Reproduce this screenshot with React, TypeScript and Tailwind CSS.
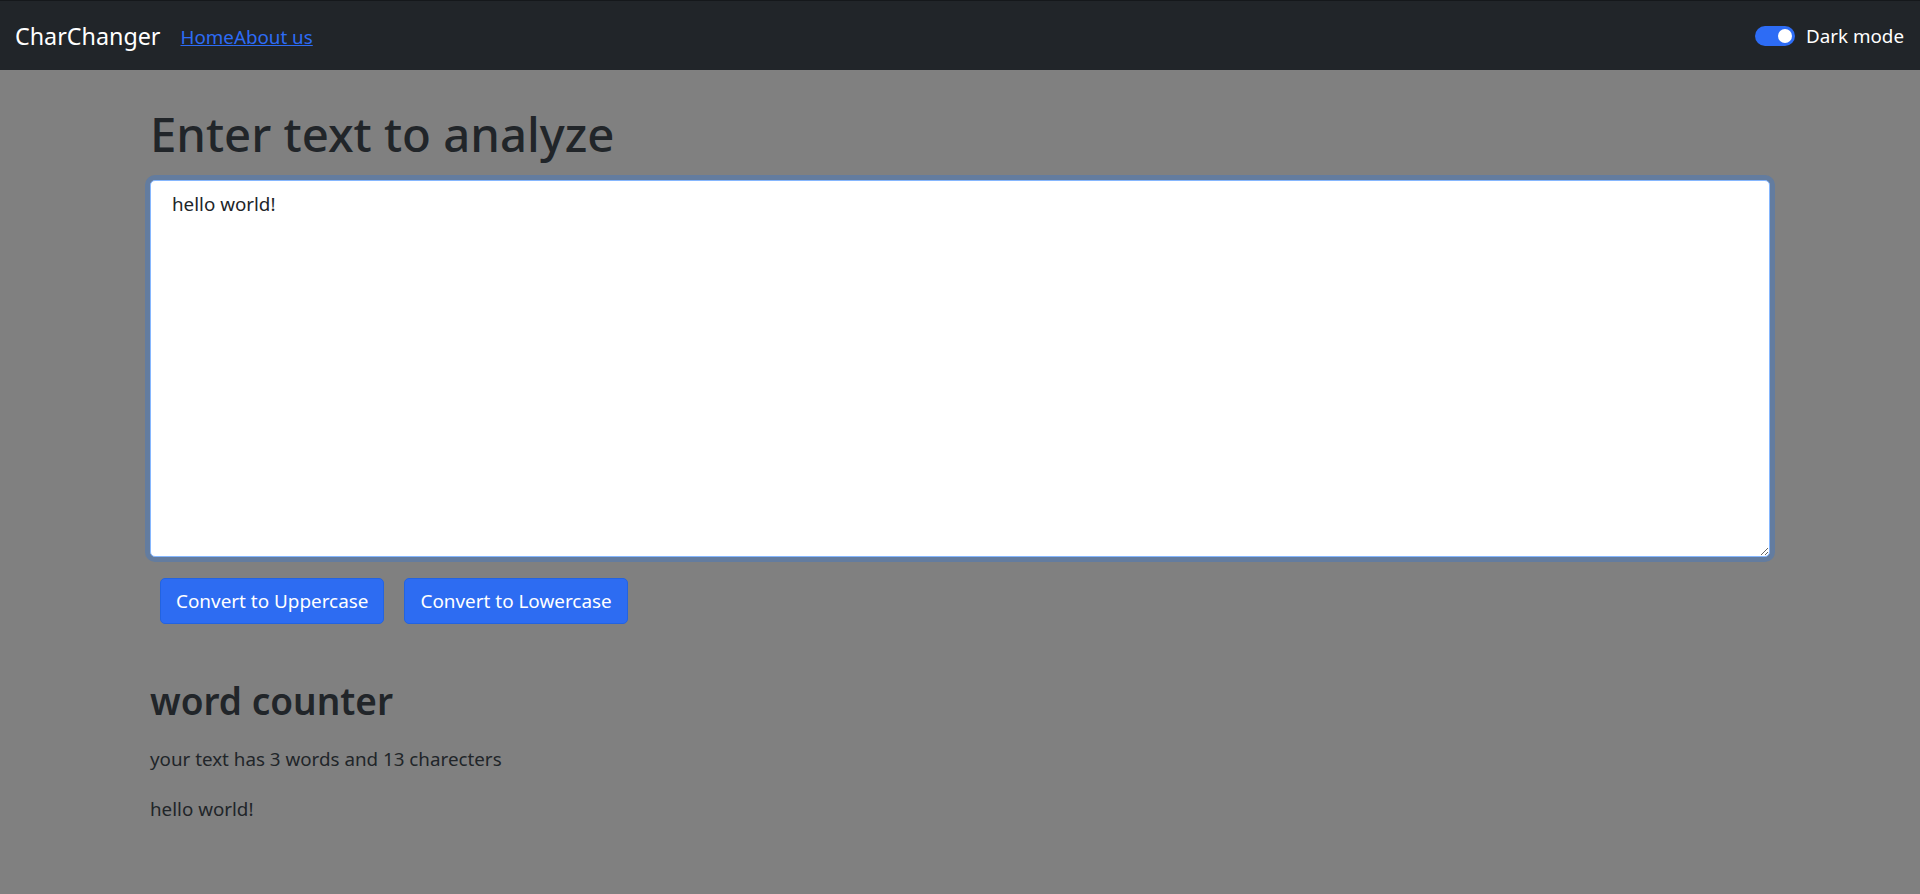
import React, { useState } from "react";

const App: React.FC = () => {
  const [text, setText] = useState("hello world! ");
  const [dark, setDark] = useState(true);

  const words = text.split(" ").length;

  return (
    <div className="min-h-screen bg-[#808080] font-['Noto_Sans',sans-serif] text-[#212529]">
      {/* Navbar */}
      <nav className="h-[70px] bg-[#212529] border-t border-[#15181b] flex items-center justify-between px-[15px]">
        <div className="flex items-center">
          <a href="#" className="text-[23.3px] leading-[37.5px] text-white mr-[20px] mt-[2px]">
            CharChanger
          </a>
          <ul className="flex text-[18.8px] leading-[30px] mt-[2px]">
            <li>
              <a href="#" className="text-[#2d6cf5] underline">Home</a>
            </li>
            <li>
              <a href="#" className="text-[#2d6cf5] underline">About us</a>
            </li>
          </ul>
        </div>
        <label className="flex items-center text-[18.8px] leading-[30px] text-white mr-[1px] cursor-pointer">
          <button
            type="button"
            onClick={() => setDark(!dark)}
            className={
              dark
                ? "w-[40px] h-[20px] rounded-full bg-[#2d6cf5] flex items-center justify-end px-[3px] mr-[11px]"
                : "w-[40px] h-[20px] rounded-full bg-white border border-[#adb5bd] flex items-center justify-start px-[3px] mr-[11px]"
            }
          >
            <span className={dark ? "w-[14px] h-[14px] rounded-full bg-white" : "w-[14px] h-[14px] rounded-full bg-[#adb5bd]"} />
          </button>
          Dark mode
        </label>
      </nav>

      {/* Main Content */}
      <main className="w-[1620px] mx-auto">
        <h1 className="text-[47.3px] leading-[60px] font-medium mt-[34px] mb-[16px]">Enter text to analyze</h1>
        <textarea
          rows={12}
          value={text}
          onChange={(e) => setText(e.target.value)}
          className="block w-full h-[377px] bg-white rounded-[5px] border border-[#86b7fe] shadow-[0_0_0_5px_rgba(13,110,253,0.25)] pl-[21px] pr-[15px] py-[7.5px] text-[18.8px] leading-[30px] text-[#212529] outline-none"
        />
        <div className="flex mt-[21px]">
          <button
            onClick={() => setText(text.toUpperCase())}
            className="h-[46px] px-[15px] mx-[10px] rounded-[5px] bg-[#2d6cf2] border border-[#2363e0] text-white text-[18.9px] leading-[30px]"
          >
            Convert to Uppercase
          </button>
          <button
            onClick={() => setText(text.toLowerCase())}
            className="h-[46px] px-[15px] mx-[10px] rounded-[5px] bg-[#2d6cf2] border border-[#2363e0] text-white text-[18.9px] leading-[30px]"
          >
            Convert to Lowercase
          </button>
        </div>

        {/* Word counter */}
        <section className="mt-[53px]">
          <h2 className="text-[37px] leading-[48px] font-semibold">word counter</h2>
          <p className="text-[18.8px] leading-[30px] mt-[19px]">
            your text has {words} words and {text.length} charecters
          </p>
          <p className="text-[18.8px] leading-[30px] mt-[20px]">{text}</p>
        </section>
      </main>
    </div>
  );
};

export default App;
